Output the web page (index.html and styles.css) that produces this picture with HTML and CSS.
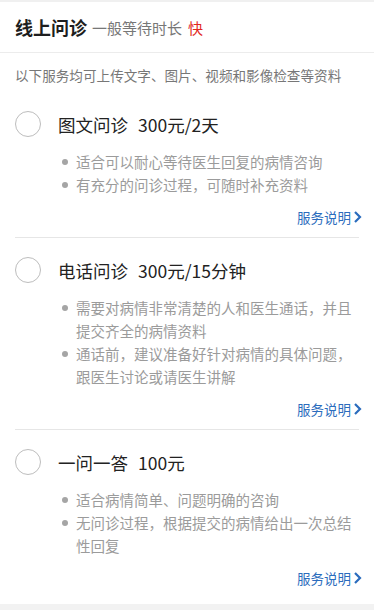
FILE: index.html
```html
<!DOCTYPE html>
<html lang="zh-CN">
<head>
    <meta charset="UTF-8">
    <meta name="viewport" content="width=device-width, initial-scale=1.0">
    <title>线上问诊</title>
    <link rel="stylesheet" href="styles.css">
</head>
<body>
    <div class="page">
        <div class="header">
            <span class="header-title">线上问诊</span>
            <span class="header-sub">一般等待时长</span>
            <span class="header-fast">快</span>
        </div>
        <div class="intro">以下服务均可上传文字、图片、视频和影像检查等资料</div>

        <div class="service first">
            <div class="service-head">
                <span class="radio"></span>
                <span class="service-name">图文问诊</span>
                <span class="service-price">300元/2天</span>
            </div>
            <ul class="service-desc">
                <li>适合可以耐心等待医生回复的病情咨询</li>
                <li>有充分的问诊过程，可随时补充资料</li>
            </ul>
            <div class="service-more">
                <a href="#">服务说明<svg class="chev" viewBox="0 0 9 14"><polyline points="2,2 7,7 2,12"/></svg></a>
            </div>
        </div>

        <div class="service">
            <div class="service-head">
                <span class="radio"></span>
                <span class="service-name">电话问诊</span>
                <span class="service-price">300元/15分钟</span>
            </div>
            <ul class="service-desc">
                <li>需要对病情非常清楚的人和医生通话，并且提交齐全的病情资料</li>
                <li>通话前，建议准备好针对病情的具体问题，跟医生讨论或请医生讲解</li>
            </ul>
            <div class="service-more">
                <a href="#">服务说明<svg class="chev" viewBox="0 0 9 14"><polyline points="2,2 7,7 2,12"/></svg></a>
            </div>
        </div>

        <div class="service last">
            <div class="service-head">
                <span class="radio"></span>
                <span class="service-name">一问一答</span>
                <span class="service-price">100元</span>
            </div>
            <ul class="service-desc">
                <li>适合病情简单、问题明确的咨询</li>
                <li>无问诊过程，根据提交的病情给出一次总结性回复</li>
            </ul>
            <div class="service-more">
                <a href="#">服务说明<svg class="chev" viewBox="0 0 9 14"><polyline points="2,2 7,7 2,12"/></svg></a>
            </div>
        </div>
        <div class="footer-band"></div>
    </div>
</body>
</html>
```

FILE: styles.css
```css
body {
    margin: 0;
    background-color: #ffffff;
    font-family: "Noto Sans CJK SC", "Noto Sans", sans-serif;
    color: #222;
}

.page {
    border-top: 2px solid #f0f0f0;
}

.header {
    height: 50px;
    padding: 0 15px;
    display: flex;
    align-items: center;
    border-bottom: 1px solid #ececec;
}

.header-title {
    font-size: 18px;
    font-weight: bold;
    color: #1e1e1e;
    margin-right: 5px;
}

.header-sub {
    font-size: 15px;
    color: #777;
    margin-right: 6px;
}

.header-fast {
    font-size: 15px;
    color: #e2271b;
}

.intro {
    padding: 12px 15px 6px;
    font-size: 13.6px;
    line-height: 20px;
    color: #777;
}

.service {
    margin: 0 15px;
    padding-top: 19px;
    border-bottom: 1px solid #e6e6e6;
}

.service.first {
    padding-top: 20px;
}

.service.last {
    border-bottom: none;
}

.service.last .service-more {
    padding-bottom: 16px;
}

.service-head {
    display: flex;
    align-items: center;
    height: 26px;
}

.radio {
    width: 24px;
    height: 24px;
    border: 1px solid #bdbdbd;
    border-radius: 50%;
    margin-right: 17px;
}

.service-name {
    font-size: 17.5px;
    margin-right: 10px;
}

.service-price {
    font-size: 17.5px;
}

.service-desc {
    list-style: none;
    margin: 13px 0 0;
    padding: 0 0 0 61px;
    font-size: 14.5px;
    line-height: 23px;
    color: #9b9b9b;
}

.service-desc li {
    position: relative;
}

.service-desc li::before {
    content: "";
    position: absolute;
    left: -14px;
    top: 9px;
    width: 6px;
    height: 6px;
    border-radius: 50%;
    background-color: #a5a5a5;
}

.service-more {
    display: flex;
    justify-content: flex-end;
    margin: 11px -3px 0 0;
    padding-bottom: 10px;
}

.service-more a {
    display: flex;
    align-items: center;
    font-size: 13.5px;
    line-height: 20px;
    color: #2b6cbd;
    text-decoration: none;
}

.chev {
    width: 9px;
    height: 14px;
    margin-left: 2px;
}

.chev polyline {
    fill: none;
    stroke: #2b6cbd;
    stroke-width: 2.2;
}

.footer-band {
    height: 8px;
    background-color: #f2f2f2;
}
```
